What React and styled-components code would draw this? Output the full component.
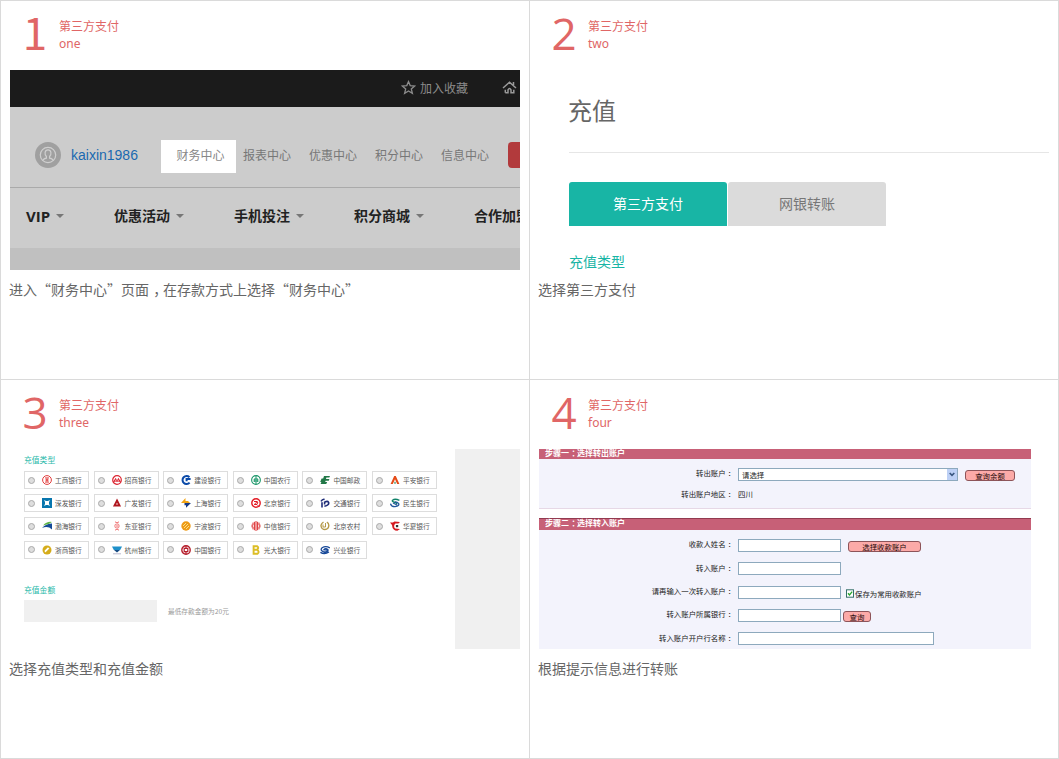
import React from "react";
import styled, { createGlobalStyle } from "styled-components";

const CJK = '"Noto Sans CJK SC", sans-serif';

const GlobalStyle = createGlobalStyle`
  body { margin: 0; background: #fff; font-family: ${CJK}; }
  *, *::before, *::after { box-sizing: border-box; }
`;

/* ---------- page grid ---------- */

const Page = styled.main`
  display: grid;
  grid-template-columns: 529px 529px;
  grid-template-rows: 379px 379px;
  width: 1059px;
  height: 759px;
  border-right: 1px solid #dadada;
  border-bottom: 1px solid #dadada;
  overflow: hidden;
`;

const Step = styled.section`
  display: flex;
  flex-direction: column;
  padding-left: 8px;
  border-left: 1px solid #dadada;
  border-top: 1px solid #dadada;
`;

const StepHeader = styled.header`
  display: flex;
  height: 69px;
  color: #e06666;
`;

const StepNumber = styled.div`
  width: 50px;
  padding-left: 2px;
  text-align: center;
  font-family: ${(p) => (p.$slab ? CJK : '"Open Sans", sans-serif')};
  font-size: 44px;
  line-height: ${(p) => (p.$slab ? 61 : 65)}px;
`;

const StepTitles = styled.div`
  padding-top: 17px;
  font: 12px/17px "Noto Sans", ${CJK};
`;

const StepCaption = styled.p`
  margin: 0;
  padding-top: 9px;
  font-size: 14px;
  line-height: 20px;
  color: #666;
`;

/* full-width punctuation centred in its em box */
const Punct = styled.span`
  margin: 0 -0.3em 0 0.3em;
`;

const Shot = styled.div`
  width: ${(p) => p.$width || 510}px;
  height: 200px;
  margin-left: 1px;
  overflow: hidden;
  flex: none;
`;

/* ---------- step 1: site header ---------- */

const TopBar = styled.div`
  display: flex;
  align-items: center;
  height: 37px;
  padding: 0 0 2px 391px;
  background: #1b1b1b;
  color: #8c8c8c;
  font-size: 12px;
  line-height: 18px;
  white-space: nowrap;
  svg { flex: none; }
`;

const TopLink = styled.span`
  width: 82px;
  margin-left: 4px;
`;

const AccountBar = styled.div`
  display: flex;
  align-items: center;
  height: 81px;
  padding: 16px 0 0 25px;
  background: #ccc;
  border-bottom: 1px solid #aaa;
  overflow: hidden;
`;

const Avatar = styled.div`
  display: flex;
  flex: none;
  width: 26px;
  height: 26px;
  border-radius: 50%;
  background: #a0a0a0;
`;

const UserName = styled.span`
  width: 100px;
  flex: none;
  padding-left: 10px;
  font: 14px/20px "Liberation Sans", sans-serif;
  color: #1a69b0;
`;

const AccountTab = styled.span`
  display: flex;
  align-items: center;
  justify-content: center;
  flex: none;
  width: ${(p) => (p.$active ? 75 : 66)}px;
  height: 33px;
  padding: ${(p) => (p.$active ? "0 0 4px 4px" : "0 4px 4px 0")};
  background: ${(p) => (p.$active ? "#fff" : "transparent")};
  color: ${(p) => (p.$active ? "#888" : "#777")};
  font-size: 12px;
`;

const TabStrip = styled.div`
  display: flex;
  margin: 3px 8px 0 0;
  flex: none;
`;

const RedButton = styled.span`
  flex: none;
  width: 60px;
  height: 26px;
  border-radius: 4px;
  background: #b23a3c;
`;

const MainNav = styled.nav`
  display: flex;
  height: 60px;
  padding: 18px 0 0 16px;
  background: #ccc;
`;

const NavItem = styled.span`
  display: flex;
  align-items: flex-start;
  flex: none;
  width: ${(p) => (p.$latin ? 88 : 120)}px;
  gap: 6px;
  font: bold ${(p) => (p.$latin ? 15 : 14)}px/20px "Open Sans", ${CJK};
  color: #222;
  &::after {
    content: "";
    margin-top: 8px;
    border: 4px solid transparent;
    border-top-color: #777;
    border-bottom: 0;
  }
`;

const NavShade = styled.div`
  height: 22px;
  background: #c0c0c0;
`;

/* ---------- step 2: payment tabs ---------- */

const Deposit = styled.div`
  padding-left: 30px;
`;

const DepositTitle = styled.h1`
  margin: 0;
  height: 83px;
  padding-top: 22px;
  border-bottom: 1px solid #e6e6e6;
  font-size: 24px;
  line-height: 36px;
  font-weight: 400;
  color: #666;
  text-indent: -1px;
`;

const PayTabs = styled.div`
  display: flex;
  gap: 1px;
  margin-top: 29px;
`;

const PayTab = styled.span`
  width: 158px;
  height: 44px;
  border-radius: 3px 3px 0 0;
  text-align: center;
  font-size: 14px;
  line-height: 42px;
  background: ${(p) => (p.$active ? "#18b5a5" : "#dbdbdb")};
  color: ${(p) => (p.$active ? "#fff" : "#777")};
`;

const DepositLabel = styled.div`
  padding-top: 27px;
  font-size: 14px;
  line-height: 17px;
  color: #18b5a5;
`;

/* ---------- step 3: bank list ---------- */

const BankShot = styled(Shot)`
  display: flex;
  justify-content: space-between;
`;

const BankForm = styled.div`
  padding: 5px 0 0 14px;
`;

const SideBlock = styled.div`
  width: 65px;
  background: #f0f0f0;
`;

const SmallLabel = styled.div`
  font-size: 7.8px;
  line-height: 12px;
  color: #28b9aa;
`;

const BankGrid = styled.div`
  display: grid;
  grid-template-columns: repeat(6, 65px);
  grid-auto-rows: 18px;
  gap: 5.2px 4.6px;
  padding: 5px 0 25px;
`;

const Bank = styled.div`
  display: flex;
  align-items: center;
  padding-left: 3px;
  border: 1px solid #ddd;
  font-size: 6.7px;
  line-height: 10px;
  white-space: nowrap;
  color: #555;
  svg { flex: none; margin: 0 3px 0 7px; }
`;

const Radio = styled.i`
  flex: none;
  width: 7px;
  height: 7px;
  border: 1px solid #aaa;
  border-radius: 50%;
  background: #dedede;
`;

const AmountRow = styled.div`
  display: flex;
  align-items: center;
  gap: 11px;
  margin-top: 4px;
  font-size: 6.7px;
  color: #999;
`;

const AmountInput = styled.div`
  width: 133px;
  height: 22px;
  background: #f0f0f0;
`;

/* ---------- step 4: transfer form ---------- */

const TransferShot = styled(Shot)`
  font-size: 7.4px;
  line-height: 11px;
  color: #222;
  background: #fff;
`;

const Bar = styled.div`
  height: ${(p) => (p.$cut ? 10 : 12)}px;
  padding-left: 6px;
  border-top: ${(p) => (p.$cut ? 0 : "1px solid #923a50")};
  background: #c76077;
  color: #fff;
  font-weight: 700;
  font-size: 8px;
  line-height: ${(p) => (p.$cut ? 8 : 7)}px;
`;

const FormBody = styled.div`
  height: ${(p) => p.$height}px;
  padding-top: ${(p) => p.$top}px;
  margin-bottom: 9px;
  background: #f3f3fc;
  border-bottom: 1px solid #e6d8e6;
`;

const FormRow = styled.div`
  display: flex;
  align-items: center;
  height: ${(p) => p.$height || 23.4}px;
`;

const FormLabel = styled.span`
  width: 199px;
  padding: 0 5px 3px 0;
  text-align: right;
  flex: none;
`;

const PlainValue = styled.span`
  padding-bottom: 2px;
`;

const Field = styled.span`
  display: flex;
  align-items: center;
  justify-content: space-between;
  flex: none;
  width: ${(p) => p.$width || 103}px;
  height: 13px;
  padding-left: 3px;
  border: 1px solid #8da9bd;
  background: #fff;
`;

const SelectArrow = styled.span`
  display: flex;
  align-items: center;
  justify-content: center;
  width: 10px;
  height: 11px;
  background: #bdd0f5;
`;

const FormButton = styled.span`
  flex: none;
  width: ${(p) => p.$width}px;
  height: 11px;
  margin: 2px 0 0 ${(p) => p.$gap}px;
  border: 1px solid #8d5459;
  border-radius: 3px;
  background: #fcaaa8;
  text-align: center;
  line-height: 9px;
  color: #1c0808;
`;

const CheckLabel = styled.span`
  display: flex;
  align-items: center;
  gap: 1px;
  margin-left: 5px;
  padding-top: 2px;
`;

/* ---------- drawings ---------- */

const StarIcon = () => (
  <svg width="15" height="15" viewBox="0 0 15 15" fill="none" stroke="#8c8c8c" strokeWidth="1.3">
    <path d="M7.5 1.6 9.2 5.6 13.7 6 10.3 8.9 11.4 13.4 7.5 11 3.6 13.4 4.7 8.9 1.3 6 5.8 5.6Z" />
  </svg>
);

const HomeIcon = () => (
  <svg width="15" height="15" viewBox="0 0 15 15" fill="none" stroke="#9a9a9a" strokeWidth="1.5">
    <path d="M1 8 7.5 2.3 14 8M11.5 5V2M3.3 12.8H6V9.8Q7.5 7.3 9 9.8V12.8H11.8V9.8M3.3 12.8V9.8" />
  </svg>
);

const PersonIcon = () => (
  <svg width="26" height="26" viewBox="0 0 26 26" fill="none" stroke="#cfcfcf" strokeWidth="1.2">
    <circle cx="13" cy="13" r="7.7" />
    <path d="M8 18.5Q8.4 16.6 11.4 16.2V14.5Q9.7 12.5 10.1 10.3 10.7 7.9 13 7.9T15.9 10.3Q16.3 12.5 14.6 14.5V16.2Q17.6 16.6 18 18.5" />
  </svg>
);

const ArrowIcon = () => (
  <svg width="6" height="5" viewBox="0 0 6 5" fill="none" stroke="#38557f" strokeWidth="1.6">
    <path d="M.7 1 3 3.4 5.3 1" />
  </svg>
);

const CheckIcon = () => (
  <svg width="8" height="9" viewBox="0 0 8 9" fill="none">
    <rect x=".5" y=".8" width="7" height="7.4" fill="#fff" stroke="#35706a" />
    <path d="M2 4.3 3.5 6 6.2 2.6" stroke="#26a52b" strokeWidth="1.3" />
  </svg>
);

const ring = (c, w = 1) => <circle cx="5" cy="5" r={4.9 - w / 2} fill="none" stroke={c} strokeWidth={w} />;

const LOGOS = {
  icbc: <>{ring("#e23b3b")}<path d="M3 2.8H7M3 7.2H7M3.3 4H4.4V6H3.3M6.7 4H5.6V6H6.7M5 3V7" stroke="#e23b3b" strokeWidth=".8" fill="none" /></>,
  cmb: <>{ring("#dc2430", 1.2)}<path d="M1 7 3.7 2.8 5 5.3 6.4 2.8 9 7Z" fill="#dc2430" /><path d="M3 7 4 4.7M5 7.2V5.6M7 7 6 4.7" stroke="#fff" strokeWidth=".6" /></>,
  ccb: <path d="M8.4 2.2A4 4 0 1 0 8.6 7.6M9.6 4H5.6V6.2" fill="none" stroke="#0b4aa8" strokeWidth="2" />,
  abc: <>{ring("#179567", 1.1)}<path d="M5 1V9M3 4H7M3 6H7M3.2 4V7M6.8 4V7" stroke="#179567" strokeWidth="1" /></>,
  post: <path d="M4 1H10L9.3 2.6H6.4L6 4H9.4L8.8 5.7H5.6L5.2 7H7.2L6.2 9H.6L1.4 7H.2L1.6 3.4H3.2Z" fill="#217747" />,
  pingan: <><path d="M.6 9 4.2 1H5.8L9.4 9H7.2L5 4.2 2.8 9Z" fill="#e54b18" /><path d="M4 8.6 5 6.2 6 8.6Z" fill="#13814b" /></>,
  sdb: <><path d="M0 0H10V10H0Z" fill="#0876ae" /><path d="M2 2 4 3H6L8 2 7 4V6L8 8 6 7H4L2 8 3 6V4Z" fill="#fff" /></>,
  gdb: <path d="M5 2.5 7.5 7.5H2.5Z" fill="none" stroke="#b01820" strokeWidth="1.9" />,
  shb: <><path d="M0 5 4.5 0V3H7L9 5Z" fill="#f4a514" /><path d="M3.5 5H10L5 9.8V7.2H3.5Z" fill="#173a85" /></>,
  bob: <>{ring("#e31922", 1.4)}<path d="M3 3.5H6.3L3.2 6.5H6L8.5 9M6 3.5 7 5 5.5 6" fill="none" stroke="#e31922" strokeWidth="1" /></>,
  comm: <path d="M2 9.4V4.2M1 3.4Q2.5 .8 4.6 1.4M4.4 8.2Q9.4 7.2 8.6 4.4 7.6 2.6 4.6 4.2V6.4" fill="none" stroke="#1e2c78" strokeWidth="1.6" />,
  cmbc: <><path d="M9.4 2.4Q5 .2 2.6 2.2C1 4.6 7.6 3.8 6.6 6.2" fill="none" stroke="#118269" strokeWidth="1.4" /><path d="M.4 5.6Q1.4 8.8 5 8.7 9.8 8 8.6 5.4 7 3.8 5 4M3 5 7 7" fill="none" stroke="#23579c" strokeWidth="1.3" /></>,
  bohai: <><path d="M0 7Q4 2.4 10 2.4V8.4Q5.8 4.4 0 7Z" fill="#154c97" /><path d="M1 4.6Q5 0 10 1L6.5 3Z" fill="#5cb445" /></>,
  bea: <path d="M3 .8Q5 3 7 .8M3 9.2Q5 7 7 9.2M4.4 2.4C2.4 4 2.4 6 4.4 7.6M5.6 2.4C7.6 4 7.6 6 5.6 7.6M5 3V7" fill="none" stroke="#f06f70" strokeWidth="1" />,
  ningbo: <><circle cx="5" cy="5" r="4.7" fill="#ee9b16" /><path d="M2 5 5 2M3 7 7 3M5 8 8 5" stroke="#fff0a0" strokeWidth=".8" /></>,
  citic: <path d="M5 0V10M3.4 .8V9.2M6.6 .8V9.2M2 1.6V4.2H.4M2 8.4V5.8H.4M8 1.6V4.2H9.6M8 8.4V5.8H9.6" fill="none" stroke="#dc2e30" strokeWidth="1" />,
  rural: <><path d="M3.5 1Q-.7 4 2.2 7.5 5.5 10 8.3 6.7 9.8 2.5 6.8 1.2" fill="none" stroke="#b59a49" strokeWidth="1.4" /><path d="M3 3.5V6H5.5V2" fill="none" stroke="#b59a49" /></>,
  huaxia: <><path d="M0 1.6H3L4.4 .4 10 1 8.4 2.6 5.4 2.4Q2.9 5 5.2 7.6L10 8 7.4 9.8Q2.4 9.8 2 4Z" fill="#d61920" /><path d="M5.9 4H8.2V6.2H5.9Z" fill="#333" /></>,
  zheshang: <><circle cx="5" cy="5" r="4.5" fill="#d5ac1a" /><path d="M3 6.7 6.7 3" stroke="#fff" strokeWidth="2" /><path d="M4 7.5 7.5 4" stroke="#d5ac1a" /></>,
  hangzhou: <><path d="M0 1.5H10L8.2 5H1.8Z" fill="#1f90c9" /><path d="M2 5H8L5 7.6Z" fill="#174c84" /><path d="M1 8.8H9" stroke="#88a" strokeWidth=".6" /></>,
  boc: <>{ring("#b51d2b", 1.4)}<path d="M5 1V3.4M5 6.6V9M3.2 3.4H6.8V6.6H3.2Z" fill="none" stroke="#b51d2b" strokeWidth="1.2" /></>,
  ceb: <path d="M2.6 1.2H6.2Q8.3 2.7 6 4.8 9 6.8 6.5 8.8H2.6ZM2.6 4.8H6" fill="none" stroke="#dcbd25" strokeWidth="1.9" />,
  cib: <path d="M.4 7.4Q4.6 9.8 9 7M9.8 3Q6 .4 2 2.8-.4 5.6 4.2 7 8.4 6.8 8 4.8 5.6 2.6 3.8 4.8L7.5 5.2" fill="none" stroke="#174898" strokeWidth="1.3" />,
};

const BANKS = [
  ["icbc", "工商银行"], ["cmb", "招商银行"], ["ccb", "建设银行"], ["abc", "中国农行"], ["post", "中国邮政"], ["pingan", "平安银行"],
  ["sdb", "深发银行"], ["gdb", "广发银行"], ["shb", "上海银行"], ["bob", "北京银行"], ["comm", "交通银行"], ["cmbc", "民生银行"],
  ["bohai", "渤海银行"], ["bea", "东亚银行"], ["ningbo", "宁波银行"], ["citic", "中信银行"], ["rural", "北京农村"], ["huaxia", "华夏银行"],
  ["zheshang", "浙商银行"], ["hangzhou", "杭州银行"], ["boc", "中国银行"], ["ceb", "光大银行"], ["cib", "兴业银行"],
];

/* ---------- shots ---------- */

const SiteHeaderShot = () => (
  <Shot>
    <TopBar>
      <StarIcon />
      <TopLink>加入收藏</TopLink>
      <HomeIcon />
    </TopBar>
    <AccountBar>
      <Avatar><PersonIcon /></Avatar>
      <UserName>kaixin1986</UserName>
      <TabStrip>
        <AccountTab $active>财务中心</AccountTab>
        <AccountTab>报表中心</AccountTab>
        <AccountTab>优惠中心</AccountTab>
        <AccountTab>积分中心</AccountTab>
        <AccountTab>信息中心</AccountTab>
      </TabStrip>
      <RedButton />
    </AccountBar>
    <MainNav>
      <NavItem $latin>VIP</NavItem>
      <NavItem>优惠活动</NavItem>
      <NavItem>手机投注</NavItem>
      <NavItem>积分商城</NavItem>
      <NavItem>合作加盟</NavItem>
    </MainNav>
    <NavShade />
  </Shot>
);

const DepositShot = () => (
  <Shot>
    <Deposit>
      <DepositTitle>充值</DepositTitle>
      <PayTabs>
        <PayTab $active>第三方支付</PayTab>
        <PayTab>网银转账</PayTab>
      </PayTabs>
      <DepositLabel>充值类型</DepositLabel>
    </Deposit>
  </Shot>
);

const BankListShot = () => (
  <BankShot>
    <BankForm>
      <SmallLabel>充值类型</SmallLabel>
      <BankGrid>
        {BANKS.map(([logo, name]) => (
          <Bank key={logo}>
            <Radio />
            <svg width="10" height="10" viewBox="0 0 10 10">{LOGOS[logo]}</svg>
            {name}
          </Bank>
        ))}
      </BankGrid>
      <SmallLabel>充值金额</SmallLabel>
      <AmountRow>
        <AmountInput />
        最低存款金额为20元
      </AmountRow>
    </BankForm>
    <SideBlock />
  </BankShot>
);

const Label = ({ children }) => (
  <FormLabel>{children}<Punct>：</Punct></FormLabel>
);

const TransferFormShot = () => (
  <TransferShot $width={492}>
    <Bar $cut>步骤一<Punct>：</Punct>选择转出账户</Bar>
    <FormBody $height={50} $top={5}>
      <FormRow $height={20}>
        <Label>转出账户</Label>
        <Field $width={220}>请选择<SelectArrow><ArrowIcon /></SelectArrow></Field>
        <FormButton $width={50} $gap={7}>查询余额</FormButton>
      </FormRow>
      <FormRow $height={21}>
        <Label>转出账户地区</Label>
        <PlainValue>四川</PlainValue>
      </FormRow>
    </FormBody>
    <Bar>步骤二<Punct>：</Punct>选择转入账户</Bar>
    <FormBody $height={140} $top={3.6}>
      <FormRow>
        <Label>收款人姓名</Label>
        <Field />
        <FormButton $width={73} $gap={7}>选择收款账户</FormButton>
      </FormRow>
      <FormRow>
        <Label>转入账户</Label>
        <Field />
      </FormRow>
      <FormRow>
        <Label>请再输入一次转入账户</Label>
        <Field />
        <CheckLabel><CheckIcon />保存为常用收款账户</CheckLabel>
      </FormRow>
      <FormRow>
        <Label>转入账户所属银行</Label>
        <Field />
        <FormButton $width={28} $gap={2}>查询</FormButton>
      </FormRow>
      <FormRow>
        <Label>转入账户开户行名称</Label>
        <Field $width={196} />
      </FormRow>
    </FormBody>
  </TransferShot>
);

const STEPS = [
  { en: "one", Preview: SiteHeaderShot, caption: <>进入“财务中心”页面<Punct>，</Punct>在存款方式上选择“财务中心”</> },
  { en: "two", Preview: DepositShot, caption: "选择第三方支付" },
  { en: "three", Preview: BankListShot, caption: "选择充值类型和充值金额" },
  { en: "four", Preview: TransferFormShot, caption: "根据提示信息进行转账" },
];

export default function App() {
  return (
    <>
      <GlobalStyle />
      <Page lang="zh-CN">
        {STEPS.map(({ en, Preview, caption }, i) => (
          <Step key={en}>
            <StepHeader>
              <StepNumber $slab={i === 0}>{i + 1}</StepNumber>
              <StepTitles>
                <div>第三方支付</div>
                <div>{en}</div>
              </StepTitles>
            </StepHeader>
            <Preview />
            <StepCaption>{caption}</StepCaption>
          </Step>
        ))}
      </Page>
    </>
  );
}
